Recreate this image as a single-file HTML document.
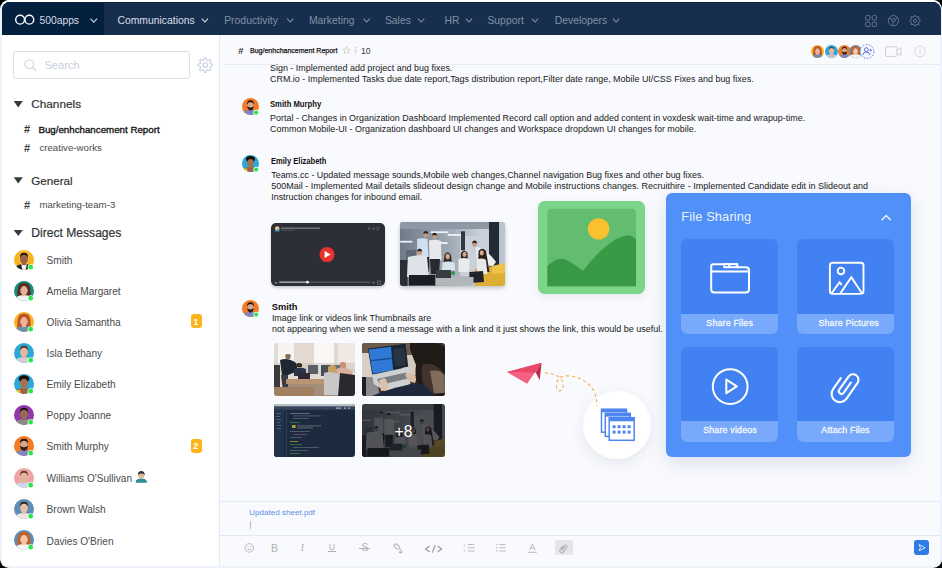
<!DOCTYPE html><html><head><meta charset="utf-8"><style>
*{margin:0;padding:0;box-sizing:border-box}
html,body{width:942px;height:568px;overflow:hidden;background:#000}
body{font-family:"Liberation Sans",sans-serif;position:relative}
.a{position:absolute}
.t{position:absolute;white-space:nowrap;line-height:1}
#app{position:absolute;left:0;top:0;width:942px;height:568px;border-radius:9px;overflow:hidden;background:#eef2fb}
svg{position:absolute;overflow:visible}
</style></head><body><div id="app">
<div class="a" style="left:0;top:0;width:942px;height:3px;background:#fff"></div>
<div class="a" style="left:1.5px;top:2px;width:939px;height:33px;background:#172e4d;border-radius:8px 8px 0 0;overflow:hidden"><div class="a" style="left:0;top:0;width:102.5px;height:33px;background:#04203f"></div><div class="a" style="left:0;top:0;width:939px;height:0.8px;background:#0c2342"></div></div>
<svg style="left:0;top:0" width="942" height="40"><circle cx="20.1" cy="19.7" r="4.4" fill="none" stroke="#fff" stroke-width="1.4"/><circle cx="29.3" cy="19.7" r="4.4" fill="none" stroke="#fff" stroke-width="1.4"/><polyline points="90.5,18.6 93.8,22.2 97.1,18.6" fill="none" stroke="#cdd5df" stroke-width="1.1"/></svg>
<div class="t" style="left:39.50px;top:15.78px;font-size:10.3px;color:#d6dde7;font-weight:normal;">500apps</div>
<div class="t" style="left:117.40px;top:15.90px;font-size:10.4px;color:#d9dfe8;font-weight:normal;">Communications</div>
<div class="t" style="left:224.20px;top:15.90px;font-size:10.4px;color:#7f91a8;font-weight:normal;">Productivity</div>
<div class="t" style="left:308.90px;top:15.90px;font-size:10.4px;color:#7f91a8;font-weight:normal;">Marketing</div>
<div class="t" style="left:384.90px;top:15.90px;font-size:10.4px;color:#7f91a8;font-weight:normal;">Sales</div>
<div class="t" style="left:444.40px;top:15.90px;font-size:10.4px;color:#7f91a8;font-weight:normal;">HR</div>
<div class="t" style="left:487.40px;top:15.90px;font-size:10.4px;color:#7f91a8;font-weight:normal;">Support</div>
<div class="t" style="left:554.70px;top:15.90px;font-size:10.4px;color:#7f91a8;font-weight:normal;">Developers</div>
<svg style="left:0;top:0" width="942" height="40"><polyline points="201.8,18.6 204.9,22 208.0,18.6" fill="none" stroke="#d9dfe8" stroke-width="1.1"/><polyline points="287.1,18.6 290.2,22 293.3,18.6" fill="none" stroke="#7f91a8" stroke-width="1.1"/><polyline points="363.6,18.6 366.7,22 369.8,18.6" fill="none" stroke="#7f91a8" stroke-width="1.1"/><polyline points="418.1,18.6 421.2,22 424.3,18.6" fill="none" stroke="#7f91a8" stroke-width="1.1"/><polyline points="465.90000000000003,18.6 469.0,22 472.1,18.6" fill="none" stroke="#7f91a8" stroke-width="1.1"/><polyline points="531.9,18.6 535.0,22 538.1,18.6" fill="none" stroke="#7f91a8" stroke-width="1.1"/><polyline points="613.0,18.6 616.1,22 619.2,18.6" fill="none" stroke="#7f91a8" stroke-width="1.1"/></svg>
<svg style="left:0;top:0" width="942" height="40">
<rect x="865.6" y="15.6" width="4.4" height="4.4" rx="1.1" fill="none" stroke="#63768f" stroke-width="1"/>
<rect x="872.2" y="15.6" width="4.4" height="4.4" rx="1.1" fill="none" stroke="#63768f" stroke-width="1"/>
<rect x="865.6" y="22.1" width="4.4" height="4.4" rx="1.1" fill="none" stroke="#63768f" stroke-width="1"/>
<rect x="872.2" y="22.1" width="4.4" height="4.4" rx="1.1" fill="none" stroke="#63768f" stroke-width="1"/>
<circle cx="893.4" cy="20.7" r="5.1" fill="none" stroke="#63768f" stroke-width="1"/>
<circle cx="893.6" cy="20.2" r="1.7" fill="none" stroke="#63768f" stroke-width="1"/>
<path d="M893.2,21.9 L892.6,25.7 M891.9,19.6 L889,18.2 M895.3,19.8 L897.3,17.4" stroke="#63768f" stroke-width="0.8" fill="none"/>
<g transform="translate(915,20.7)" fill="none" stroke="#63768f" stroke-width="1">
<path d="M0,-5.5 L1.3,-3.6 L3.9,-3.9 L3.6,-1.3 L5.5,0 L3.6,1.3 L3.9,3.9 L1.3,3.6 L0,5.5 L-1.3,3.6 L-3.9,3.9 L-3.6,1.3 L-5.5,0 L-3.6,-1.3 L-3.9,-3.9 L-1.3,-3.6 Z"/>
<circle r="1.6"/></g>
</svg>
<div class="a" style="left:1.5px;top:35px;width:217.5px;height:531px;background:#fff"></div>
<div class="a" style="left:219px;top:35px;width:1px;height:531px;background:#e2e9f4"></div>
<div class="a" style="left:220px;top:35px;width:720px;height:531px;background:#f9fafd"></div>
<div class="a" style="left:940px;top:35px;width:2px;height:533px;background:#eff1fd"></div>
<div class="a" style="left:13px;top:51px;width:177px;height:28px;border:1px solid #d8e0ec;border-radius:3px;background:#fff"></div>
<svg style="left:0;top:0" width="230" height="90">
<circle cx="29.3" cy="64.3" r="4.3" fill="none" stroke="#cdd5e0" stroke-width="1.2"/>
<line x1="32.4" y1="67.4" x2="36.2" y2="71" stroke="#cdd5e0" stroke-width="1.3"/>
<path d="M204.39,57.86 L206.21,57.86 L206.75,60.11 L207.81,60.54 L209.77,59.33 L211.07,60.63 L209.86,62.59 L210.29,63.65 L212.54,64.19 L212.54,66.01 L210.29,66.55 L209.86,67.61 L211.07,69.57 L209.77,70.87 L207.81,69.66 L206.75,70.09 L206.21,72.34 L204.39,72.34 L203.85,70.09 L202.79,69.66 L200.83,70.87 L199.53,69.57 L200.74,67.61 L200.31,66.55 L198.06,66.01 L198.06,64.19 L200.31,63.65 L200.74,62.59 L199.53,60.63 L200.83,59.33 L202.79,60.54 L203.85,60.11 Z" fill="none" stroke="#c9d2de" stroke-width="1.1" stroke-linejoin="round"/><circle cx="205.3" cy="65.1" r="2.3" fill="none" stroke="#c9d2de" stroke-width="1.1"/>
</svg>
<div class="t" style="left:44.40px;top:59.92px;font-size:11.2px;color:#c8cfd9;font-weight:normal;">Search</div>
<svg style="left:0;top:0" width="230" height="250"><polygon points="13.7,101.1 22.8,101.1 18.25,107.4" fill="#3a3a3a"/><polygon points="13.7,177.3 22.8,177.3 18.25,183.5" fill="#3a3a3a"/><polygon points="13.7,229.9 22.8,229.9 18.25,236.1" fill="#3a3a3a"/></svg>
<div class="t" style="left:31.20px;top:99.01px;font-size:11.8px;color:#333;font-weight:normal;-webkit-text-stroke:0.2px #333">Channels</div>
<div class="t" style="left:31.30px;top:174.68px;font-size:11.6px;color:#333;font-weight:normal;-webkit-text-stroke:0.2px #333">General</div>
<div class="t" style="left:31.30px;top:226.56px;font-size:12.1px;color:#333;font-weight:normal;-webkit-text-stroke:0.2px #333">Direct Messages</div>
<div class="t" style="left:24.00px;top:123.69px;font-size:11px;color:#333;font-weight:bold;">#</div>
<div class="t" style="left:38.40px;top:125.16px;font-size:9.74px;color:#161616;font-weight:normal;-webkit-text-stroke:0.35px #161616">Bug/enhchancement Report</div>
<div class="t" style="left:24.00px;top:143.49px;font-size:11px;color:#444;font-weight:bold;">#</div>
<div class="t" style="left:39.40px;top:143.49px;font-size:9.7px;color:#4a4a4a;font-weight:normal;">creative-works</div>
<div class="t" style="left:24.00px;top:199.69px;font-size:11px;color:#444;font-weight:bold;">#</div>
<div class="t" style="left:39.40px;top:199.99px;font-size:9.7px;color:#4a4a4a;font-weight:normal;">marketing-team-3</div>
<svg style="left:12.399999999999999px;top:248.0px" width="24" height="24" viewBox="-12.0 -12.0 24 24"><defs><clipPath id="c1"><circle r="10.0"/></clipPath></defs><g clip-path="url(#c1)"><rect x="-10.0" y="-10.0" width="20" height="20" fill="#f7b425"/><path d="M-10.0,11.0 Q-9.0,5.0 -3.0,4.2 L3.0,4.2 Q9.0,5.0 10.0,11.0 Z" fill="#1f2330"/><path d="M-2.8,4.2 L2.8,4.2 L1.5,11.0 L-1.5,11.0 Z" fill="#f4f4f4"/><rect x="-2.0" y="1.5" width="4.0" height="3.6" fill="#9a6248"/><ellipse cx="0" cy="-1.3" rx="3.9" ry="4.9" fill="#9a6248"/><path d="M-4.0,-1.8 Q-4.4,-7.4 0,-7.2 Q4.4,-7.4 4.0,-1.8 Q3.4,-5.0 0,-5.2 Q-3.4,-5.0 -4.0,-1.8 Z" fill="#1b1410"/></g><circle cx="6.7" cy="7.2" r="3.05" fill="#fff"/><circle cx="6.7" cy="7.2" r="2.35" fill="#25e64a"/></svg>
<div class="t" style="left:46.60px;top:255.85px;font-size:10.1px;color:#4a4a4a;font-weight:normal;">Smith</div>
<svg style="left:12.399999999999999px;top:279.0px" width="24" height="24" viewBox="-12.0 -12.0 24 24"><defs><clipPath id="c2"><circle r="10.0"/></clipPath></defs><g clip-path="url(#c2)"><rect x="-10.0" y="-10.0" width="20" height="20" fill="#13907e"/><path d="M-6.5,8.0 Q-7.5,-3.0 -4.5,-7.0 Q0,-10.0 4.5,-7.0 Q7.5,-3.0 6.5,8.0 Z" fill="#5a2f22"/><path d="M-10.0,11.0 Q-9.0,5.0 -3.0,4.2 L3.0,4.2 Q9.0,5.0 10.0,11.0 Z" fill="#f2f2f2"/><rect x="-2.0" y="1.5" width="4.0" height="3.6" fill="#e2b39a"/><ellipse cx="0" cy="-1.3" rx="3.9" ry="4.9" fill="#e2b39a"/><path d="M-4.2,0.0 Q-4.6,-7.2 0,-7.0 Q4.6,-7.2 4.2,0.0 Q2.4,-5.2 0,-5.0 Q-2.4,-5.2 -4.2,0.0 Z" fill="#5a2f22"/></g><circle cx="6.7" cy="7.2" r="3.05" fill="#fff"/><circle cx="6.7" cy="7.2" r="2.35" fill="#25e64a"/></svg>
<div class="t" style="left:46.60px;top:286.85px;font-size:10.1px;color:#4a4a4a;font-weight:normal;">Amelia Margaret</div>
<svg style="left:12.399999999999999px;top:310.0px" width="24" height="24" viewBox="-12.0 -12.0 24 24"><defs><clipPath id="c3"><circle r="10.0"/></clipPath></defs><g clip-path="url(#c3)"><rect x="-10.0" y="-10.0" width="20" height="20" fill="#f7b425"/><path d="M-6.5,8.0 Q-7.5,-3.0 -4.5,-7.0 Q0,-10.0 4.5,-7.0 Q7.5,-3.0 6.5,8.0 Z" fill="#c0522a"/><path d="M-10.0,11.0 Q-9.0,5.0 -3.0,4.2 L3.0,4.2 Q9.0,5.0 10.0,11.0 Z" fill="#6d8fa8"/><rect x="-2.0" y="1.5" width="4.0" height="3.6" fill="#eab59a"/><ellipse cx="0" cy="-1.3" rx="3.9" ry="4.9" fill="#eab59a"/><path d="M-4.2,0.0 Q-4.6,-7.2 0,-7.0 Q4.6,-7.2 4.2,0.0 Q2.4,-5.2 0,-5.0 Q-2.4,-5.2 -4.2,0.0 Z" fill="#c0522a"/></g><circle cx="6.7" cy="7.2" r="3.05" fill="#fff"/><circle cx="6.7" cy="7.2" r="2.35" fill="#25e64a"/></svg>
<div class="t" style="left:46.60px;top:317.85px;font-size:10.1px;color:#4a4a4a;font-weight:normal;">Olivia Samantha</div>
<svg style="left:12.399999999999999px;top:341.0px" width="24" height="24" viewBox="-12.0 -12.0 24 24"><defs><clipPath id="c4"><circle r="10.0"/></clipPath></defs><g clip-path="url(#c4)"><rect x="-10.0" y="-10.0" width="20" height="20" fill="#2aa8d8"/><path d="M-10.0,11.0 Q-9.0,5.0 -3.0,4.2 L3.0,4.2 Q9.0,5.0 10.0,11.0 Z" fill="#d0d0d0"/><rect x="-2.0" y="1.5" width="4.0" height="3.6" fill="#e6b8a0"/><ellipse cx="0" cy="-1.3" rx="3.9" ry="4.9" fill="#e6b8a0"/><path d="M-4.0,-1.8 Q-4.4,-7.4 0,-7.2 Q4.4,-7.4 4.0,-1.8 Q3.4,-5.0 0,-5.2 Q-3.4,-5.0 -4.0,-1.8 Z" fill="#5a3a2a"/></g><circle cx="6.7" cy="7.2" r="3.05" fill="#fff"/><circle cx="6.7" cy="7.2" r="2.35" fill="#25e64a"/></svg>
<div class="t" style="left:46.60px;top:348.85px;font-size:10.1px;color:#4a4a4a;font-weight:normal;">Isla Bethany</div>
<svg style="left:12.399999999999999px;top:372.0px" width="24" height="24" viewBox="-12.0 -12.0 24 24"><defs><clipPath id="c5"><circle r="10.0"/></clipPath></defs><g clip-path="url(#c5)"><rect x="-10.0" y="-10.0" width="20" height="20" fill="#2aa8d8"/><path d="M-10.0,11.0 Q-9.0,5.0 -3.0,4.2 L3.0,4.2 Q9.0,5.0 10.0,11.0 Z" fill="#9a6444"/><ellipse cx="0" cy="-5.2" rx="5.4" ry="3.6" fill="#1a1210"/><path d="M-10.0,11.0 L-9.0,6.0 L-4.0,6.0 L-3.0,11.0 Z" fill="#f2c21a"/><rect x="-2.0" y="1.5" width="4.0" height="3.6" fill="#a8704c"/><ellipse cx="0" cy="-1.3" rx="3.9" ry="4.9" fill="#a8704c"/><path d="M-4.0,-1.8 Q-4.4,-7.4 0,-7.2 Q4.4,-7.4 4.0,-1.8 Q3.4,-5.0 0,-5.2 Q-3.4,-5.0 -4.0,-1.8 Z" fill="#1a1210"/></g><circle cx="6.7" cy="7.2" r="3.05" fill="#fff"/><circle cx="6.7" cy="7.2" r="2.35" fill="#25e64a"/></svg>
<div class="t" style="left:46.60px;top:379.85px;font-size:10.1px;color:#4a4a4a;font-weight:normal;">Emily Elizabeth</div>
<svg style="left:12.399999999999999px;top:403.0px" width="24" height="24" viewBox="-12.0 -12.0 24 24"><defs><clipPath id="c6"><circle r="10.0"/></clipPath></defs><g clip-path="url(#c6)"><rect x="-10.0" y="-10.0" width="20" height="20" fill="#8e3aa8"/><path d="M-10.0,11.0 Q-9.0,5.0 -3.0,4.2 L3.0,4.2 Q9.0,5.0 10.0,11.0 Z" fill="#8a8a8a"/><rect x="-2.0" y="1.5" width="4.0" height="3.6" fill="#9a6a50"/><ellipse cx="0" cy="-1.3" rx="3.9" ry="4.9" fill="#9a6a50"/><path d="M-4.0,-1.8 Q-4.4,-7.4 0,-7.2 Q4.4,-7.4 4.0,-1.8 Q3.4,-5.0 0,-5.2 Q-3.4,-5.0 -4.0,-1.8 Z" fill="#1a1210"/></g><circle cx="6.7" cy="7.2" r="3.05" fill="#fff"/><circle cx="6.7" cy="7.2" r="2.35" fill="#25e64a"/></svg>
<div class="t" style="left:46.60px;top:410.85px;font-size:10.1px;color:#4a4a4a;font-weight:normal;">Poppy Joanne</div>
<svg style="left:12.399999999999999px;top:434.0px" width="24" height="24" viewBox="-12.0 -12.0 24 24"><defs><clipPath id="c7"><circle r="10.0"/></clipPath></defs><g clip-path="url(#c7)"><rect x="-10.0" y="-10.0" width="20" height="20" fill="#f47a26"/><path d="M-10.0,11.0 Q-9.0,5.0 -3.0,4.2 L3.0,4.2 Q9.0,5.0 10.0,11.0 Z" fill="#7d87c2"/><rect x="-2.0" y="1.5" width="4.0" height="3.6" fill="#d4a68c"/><ellipse cx="0" cy="-1.3" rx="3.9" ry="4.9" fill="#d4a68c"/><path d="M-3.9,-0.5 Q-3.6,4.6 0,4.9 Q3.6,4.6 3.9,-0.5 Q2.0,1.4 0,1.2 Q-2.0,1.4 -3.9,-0.5 Z" fill="#2a201c"/><path d="M-4.0,-1.8 Q-4.4,-7.4 0,-7.2 Q4.4,-7.4 4.0,-1.8 Q3.4,-5.0 0,-5.2 Q-3.4,-5.0 -4.0,-1.8 Z" fill="#1b1410"/></g><circle cx="6.7" cy="7.2" r="3.05" fill="#fff"/><circle cx="6.7" cy="7.2" r="2.35" fill="#25e64a"/></svg>
<div class="t" style="left:46.60px;top:441.85px;font-size:10.1px;color:#4a4a4a;font-weight:normal;">Smith Murphy</div>
<svg style="left:12.399999999999999px;top:466.0px" width="24" height="24" viewBox="-12.0 -12.0 24 24"><defs><clipPath id="c8"><circle r="10.0"/></clipPath></defs><g clip-path="url(#c8)"><rect x="-10.0" y="-10.0" width="20" height="20" fill="#eea3a6"/><path d="M-10.0,11.0 Q-9.0,5.0 -3.0,4.2 L3.0,4.2 Q9.0,5.0 10.0,11.0 Z" fill="#c8d8e8"/><rect x="-2.0" y="1.5" width="4.0" height="3.6" fill="#e3b49a"/><ellipse cx="0" cy="-1.3" rx="3.9" ry="4.9" fill="#e3b49a"/><path d="M-4.0,-1.8 Q-4.4,-7.4 0,-7.2 Q4.4,-7.4 4.0,-1.8 Q3.4,-5.0 0,-5.2 Q-3.4,-5.0 -4.0,-1.8 Z" fill="#6a4030"/></g><circle cx="6.7" cy="7.2" r="3.05" fill="#fff"/><circle cx="6.7" cy="7.2" r="2.35" fill="#25e64a"/></svg>
<div class="t" style="left:46.60px;top:473.85px;font-size:10.1px;color:#4a4a4a;font-weight:normal;">Williams O'Sullivan</div>
<svg style="left:12.399999999999999px;top:497.0px" width="24" height="24" viewBox="-12.0 -12.0 24 24"><defs><clipPath id="c9"><circle r="10.0"/></clipPath></defs><g clip-path="url(#c9)"><rect x="-10.0" y="-10.0" width="20" height="20" fill="#5b8fb8"/><path d="M-10.0,11.0 Q-9.0,5.0 -3.0,4.2 L3.0,4.2 Q9.0,5.0 10.0,11.0 Z" fill="#f0e8e0"/><rect x="-2.0" y="1.5" width="4.0" height="3.6" fill="#e8c0a8"/><ellipse cx="0" cy="-1.3" rx="3.9" ry="4.9" fill="#e8c0a8"/><path d="M-4.0,-1.8 Q-4.4,-7.4 0,-7.2 Q4.4,-7.4 4.0,-1.8 Q3.4,-5.0 0,-5.2 Q-3.4,-5.0 -4.0,-1.8 Z" fill="#3a2a20"/></g><circle cx="6.7" cy="7.2" r="3.05" fill="#fff"/><circle cx="6.7" cy="7.2" r="2.35" fill="#25e64a"/></svg>
<div class="t" style="left:46.60px;top:504.85px;font-size:10.1px;color:#4a4a4a;font-weight:normal;">Brown Walsh</div>
<svg style="left:12.399999999999999px;top:528.0px" width="24" height="24" viewBox="-12.0 -12.0 24 24"><defs><clipPath id="c10"><circle r="10.0"/></clipPath></defs><g clip-path="url(#c10)"><rect x="-10.0" y="-10.0" width="20" height="20" fill="#5b8fb8"/><path d="M-6.5,8.0 Q-7.5,-3.0 -4.5,-7.0 Q0,-10.0 4.5,-7.0 Q7.5,-3.0 6.5,8.0 Z" fill="#c0642a"/><path d="M-10.0,11.0 Q-9.0,5.0 -3.0,4.2 L3.0,4.2 Q9.0,5.0 10.0,11.0 Z" fill="#f4f4f4"/><rect x="-2.0" y="1.5" width="4.0" height="3.6" fill="#f0c8b0"/><ellipse cx="0" cy="-1.3" rx="3.9" ry="4.9" fill="#f0c8b0"/><path d="M-4.2,0.0 Q-4.6,-7.2 0,-7.0 Q4.6,-7.2 4.2,0.0 Q2.4,-5.2 0,-5.0 Q-2.4,-5.2 -4.2,0.0 Z" fill="#c0642a"/></g><circle cx="6.7" cy="7.2" r="3.05" fill="#fff"/><circle cx="6.7" cy="7.2" r="2.35" fill="#25e64a"/></svg>
<div class="t" style="left:46.60px;top:536.75px;font-size:10.1px;color:#4a4a4a;font-weight:normal;">Davies O'Brien</div>
<div class="a" style="left:190.8px;top:314.2px;width:10.8px;height:14.3px;border-radius:3px;background:#fbb51a"></div>
<div class="t" style="left:193.60px;top:317.58px;font-size:9px;color:#fff;font-weight:normal;font-weight:bold">1</div>
<div class="a" style="left:190.8px;top:438.9px;width:10.8px;height:14.3px;border-radius:3px;background:#fbb51a"></div>
<div class="t" style="left:193.30px;top:442.28px;font-size:9px;color:#fff;font-weight:normal;font-weight:bold">2</div>
<svg style="left:0;top:0" width="160" height="500">
<path d="M135.6,482.8 Q135.6,478.6 141.3,478.6 Q147,478.6 147,482.8 Z" fill="#2e8f92"/>
<circle cx="141.3" cy="475.4" r="3.1" fill="#e2b898"/>
<path d="M138,475.6 Q137.6,471 141.3,471 Q145,471 144.6,475.6 Q144,473.4 141.3,473.6 Q138.6,473.4 138,475.6Z" fill="#2f3236"/>
</svg>
<div class="t" style="left:238.20px;top:45.84px;font-size:9.4px;color:#333;font-weight:bold;">#</div>
<div class="t" style="left:249.60px;top:46.80px;font-size:7.8px;color:#111;font-weight:normal;transform:scaleX(0.9);transform-origin:0 0;-webkit-text-stroke:0.25px #111">Bug/enhchancement Report</div>
<svg style="left:0;top:0" width="942" height="70">
<path d="M346.6,46.6 L347.6,49.2 L350.3,49.3 L348.2,51 L348.9,53.6 L346.6,52.1 L344.3,53.6 L345,51 L342.9,49.3 L345.6,49.2 Z" fill="none" stroke="#c9c9c9" stroke-width="0.7"/>
<circle cx="355.7" cy="47.6" r="1" fill="#d3d3d3"/>
<path d="M354.6,49.4 L356.8,49.4 L356.8,52 L356.2,52 L356.2,54 L355.2,54 L355.2,52 L354.6,52 Z" fill="#d8d8d8"/>
</svg>
<div class="t" style="left:361.00px;top:46.72px;font-size:8.6px;color:#3a3a3a;font-weight:normal;">10</div>
<div class="a" style="left:223px;top:63.5px;width:717px;height:1.2px;background:#e6ebf3"></div>
<svg style="left:809.1px;top:42.7px" width="17" height="17" viewBox="-8.5 -8.5 17 17"><defs><clipPath id="c11"><circle r="6.5"/></clipPath></defs><g clip-path="url(#c11)"><rect x="-6.5" y="-6.5" width="13" height="13" fill="#f7b425"/><path d="M-4.2250000000000005,5.2 Q-4.875,-1.9500000000000002 -2.9250000000000003,-4.55 Q0,-6.5 2.9250000000000003,-4.55 Q4.875,-1.9500000000000002 4.2250000000000005,5.2 Z" fill="#c0522a"/><path d="M-6.5,7.15 Q-5.8500000000000005,3.25 -1.9500000000000002,2.7300000000000004 L1.9500000000000002,2.7300000000000004 Q5.8500000000000005,3.25 6.5,7.15 Z" fill="#6d8fa8"/><rect x="-1.3" y="0.9750000000000001" width="2.6" height="2.3400000000000003" fill="#eab59a"/><ellipse cx="0" cy="-0.8450000000000001" rx="2.535" ry="3.1850000000000005" fill="#eab59a"/><path d="M-2.7300000000000004,0.0 Q-2.9899999999999998,-4.680000000000001 0,-4.55 Q2.9899999999999998,-4.680000000000001 2.7300000000000004,0.0 Q1.56,-3.3800000000000003 0,-3.25 Q-1.56,-3.3800000000000003 -2.7300000000000004,0.0 Z" fill="#c0522a"/></g></svg>
<svg style="left:822.6px;top:42.7px" width="17" height="17" viewBox="-8.5 -8.5 17 17"><defs><clipPath id="c12"><circle r="6.5"/></clipPath></defs><g clip-path="url(#c12)"><rect x="-6.5" y="-6.5" width="13" height="13" fill="#2aa8d8"/><path d="M-6.5,7.15 Q-5.8500000000000005,3.25 -1.9500000000000002,2.7300000000000004 L1.9500000000000002,2.7300000000000004 Q5.8500000000000005,3.25 6.5,7.15 Z" fill="#c8c0d0"/><rect x="-1.3" y="0.9750000000000001" width="2.6" height="2.3400000000000003" fill="#e6b8a0"/><ellipse cx="0" cy="-0.8450000000000001" rx="2.535" ry="3.1850000000000005" fill="#e6b8a0"/><path d="M-2.6,-1.1700000000000002 Q-2.8600000000000003,-4.8100000000000005 0,-4.680000000000001 Q2.8600000000000003,-4.8100000000000005 2.6,-1.1700000000000002 Q2.21,-3.25 0,-3.3800000000000003 Q-2.21,-3.25 -2.6,-1.1700000000000002 Z" fill="#5a3a2a"/></g></svg>
<svg style="left:835.5px;top:42.7px" width="17" height="17" viewBox="-8.5 -8.5 17 17"><defs><clipPath id="c13"><circle r="6.5"/></clipPath></defs><g clip-path="url(#c13)"><rect x="-6.5" y="-6.5" width="13" height="13" fill="#f47a26"/><path d="M-6.5,7.15 Q-5.8500000000000005,3.25 -1.9500000000000002,2.7300000000000004 L1.9500000000000002,2.7300000000000004 Q5.8500000000000005,3.25 6.5,7.15 Z" fill="#7d87c2"/><rect x="-1.3" y="0.9750000000000001" width="2.6" height="2.3400000000000003" fill="#d4a68c"/><ellipse cx="0" cy="-0.8450000000000001" rx="2.535" ry="3.1850000000000005" fill="#d4a68c"/><path d="M-2.535,-0.325 Q-2.3400000000000003,2.9899999999999998 0,3.1850000000000005 Q2.3400000000000003,2.9899999999999998 2.535,-0.325 Q1.3,0.9099999999999999 0,0.78 Q-1.3,0.9099999999999999 -2.535,-0.325 Z" fill="#2a201c"/><path d="M-2.6,-1.1700000000000002 Q-2.8600000000000003,-4.8100000000000005 0,-4.680000000000001 Q2.8600000000000003,-4.8100000000000005 2.6,-1.1700000000000002 Q2.21,-3.25 0,-3.3800000000000003 Q-2.21,-3.25 -2.6,-1.1700000000000002 Z" fill="#1b1410"/></g></svg>
<svg style="left:847.1px;top:42.7px" width="17" height="17" viewBox="-8.5 -8.5 17 17"><defs><clipPath id="c14"><circle r="6.5"/></clipPath></defs><g clip-path="url(#c14)"><rect x="-6.5" y="-6.5" width="13" height="13" fill="#5b8fb8"/><path d="M-4.2250000000000005,5.2 Q-4.875,-1.9500000000000002 -2.9250000000000003,-4.55 Q0,-6.5 2.9250000000000003,-4.55 Q4.875,-1.9500000000000002 4.2250000000000005,5.2 Z" fill="#c0642a"/><path d="M-6.5,7.15 Q-5.8500000000000005,3.25 -1.9500000000000002,2.7300000000000004 L1.9500000000000002,2.7300000000000004 Q5.8500000000000005,3.25 6.5,7.15 Z" fill="#f4f4f4"/><rect x="-1.3" y="0.9750000000000001" width="2.6" height="2.3400000000000003" fill="#f0c8b0"/><ellipse cx="0" cy="-0.8450000000000001" rx="2.535" ry="3.1850000000000005" fill="#f0c8b0"/><path d="M-2.7300000000000004,0.0 Q-2.9899999999999998,-4.680000000000001 0,-4.55 Q2.9899999999999998,-4.680000000000001 2.7300000000000004,0.0 Q1.56,-3.3800000000000003 0,-3.25 Q-1.56,-3.3800000000000003 -2.7300000000000004,0.0 Z" fill="#c0642a"/></g></svg>
<svg style="left:0;top:0" width="942" height="70">
<circle cx="867" cy="51.5" r="6.9" fill="#f8f9fc" stroke="#4b5fd8" stroke-width="0.9" stroke-dasharray="1.6 1.5"/>
<circle cx="866.3" cy="49.6" r="1.9" fill="none" stroke="#4b5fd8" stroke-width="0.9"/>
<path d="M862.6,55.2 Q863,52 866.3,52 Q869.6,52 870,55.2" fill="none" stroke="#4b5fd8" stroke-width="0.9"/>
<path d="M869.5,50.2 L871.9,50.2 M870.7,49 L870.7,51.4" stroke="#4b5fd8" stroke-width="0.8"/>
<rect x="885.5" y="46.8" width="11.5" height="9.6" rx="1" fill="none" stroke="#cfcfcf" stroke-width="1"/>
<path d="M897,50 L901,47.8 L901,55.4 L897,53.2" fill="none" stroke="#cfcfcf" stroke-width="1"/>
<circle cx="920" cy="51.4" r="5.4" fill="none" stroke="#d2d2d2" stroke-width="0.9"/>
<line x1="920" y1="50.3" x2="920" y2="54.2" stroke="#d0d0d0" stroke-width="1"/>
<circle cx="920" cy="48.6" r="0.55" fill="#d0d0d0"/>
</svg>
<div class="t" style="left:270.00px;top:63.72px;font-size:8.95px;color:#202020;font-weight:normal;">Sign - Implemented add project and bug fixes.</div>
<div class="t" style="left:270.00px;top:75.32px;font-size:8.95px;color:#202020;font-weight:normal;">CRM.io - Implemented Tasks due date report,Tags distribution report,Filter date range, Mobile UI/CSS Fixes and bug fixes.</div>
<svg style="left:240.1px;top:95.7px" width="21" height="21" viewBox="-10.5 -10.5 21 21"><defs><clipPath id="c15"><circle r="8.5"/></clipPath></defs><g clip-path="url(#c15)"><rect x="-8.5" y="-8.5" width="17" height="17" fill="#f47a26"/><path d="M-8.5,9.35 Q-7.6499999999999995,4.25 -2.55,3.57 L2.55,3.57 Q7.6499999999999995,4.25 8.5,9.35 Z" fill="#7d87c2"/><rect x="-1.7" y="1.275" width="3.4" height="3.06" fill="#d4a68c"/><ellipse cx="0" cy="-1.105" rx="3.315" ry="4.165" fill="#d4a68c"/><path d="M-3.315,-0.425 Q-3.06,3.9099999999999997 0,4.165 Q3.06,3.9099999999999997 3.315,-0.425 Q1.7,1.19 0,1.02 Q-1.7,1.19 -3.315,-0.425 Z" fill="#2a201c"/><path d="M-3.4,-1.53 Q-3.74,-6.29 0,-6.12 Q3.74,-6.29 3.4,-1.53 Q2.8899999999999997,-4.25 0,-4.42 Q-2.8899999999999997,-4.25 -3.4,-1.53 Z" fill="#1b1410"/></g><circle cx="5.695" cy="6.12" r="2.8" fill="#fff"/><circle cx="5.695" cy="6.12" r="2.1" fill="#25e64a"/></svg>
<div class="t" style="left:269.70px;top:98.92px;font-size:9.9px;color:#111;font-weight:bold;transform:scaleX(0.777);transform-origin:0 0;">Smith Murphy</div>
<div class="t" style="left:270.10px;top:114.42px;font-size:8.95px;color:#202020;font-weight:normal;">Portal - Changes in Organization Dashboard Implemented Record call option and added content in voxdesk wait-time and wrapup-time.</div>
<div class="t" style="left:270.10px;top:125.22px;font-size:8.95px;color:#202020;font-weight:normal;">Common Mobile-UI - Organization dashboard UI changes and Workspace dropdown UI changes for mobile.</div>
<svg style="left:240.1px;top:152.5px" width="21" height="21" viewBox="-10.5 -10.5 21 21"><defs><clipPath id="c16"><circle r="8.5"/></clipPath></defs><g clip-path="url(#c16)"><rect x="-8.5" y="-8.5" width="17" height="17" fill="#2aa8d8"/><path d="M-8.5,9.35 Q-7.6499999999999995,4.25 -2.55,3.57 L2.55,3.57 Q7.6499999999999995,4.25 8.5,9.35 Z" fill="#9a6444"/><ellipse cx="0" cy="-4.42" rx="4.59" ry="3.06" fill="#1a1210"/><path d="M-8.5,9.35 L-7.6499999999999995,5.1 L-3.4,5.1 L-2.55,9.35 Z" fill="#f2c21a"/><rect x="-1.7" y="1.275" width="3.4" height="3.06" fill="#a8704c"/><ellipse cx="0" cy="-1.105" rx="3.315" ry="4.165" fill="#a8704c"/><path d="M-3.4,-1.53 Q-3.74,-6.29 0,-6.12 Q3.74,-6.29 3.4,-1.53 Q2.8899999999999997,-4.25 0,-4.42 Q-2.8899999999999997,-4.25 -3.4,-1.53 Z" fill="#1a1210"/></g><circle cx="5.695" cy="6.12" r="2.8" fill="#fff"/><circle cx="5.695" cy="6.12" r="2.1" fill="#25e64a"/></svg>
<div class="t" style="left:271.20px;top:156.02px;font-size:9.9px;color:#111;font-weight:bold;transform:scaleX(0.766);transform-origin:0 0;">Emily Elizabeth</div>
<div class="t" style="left:271.20px;top:170.52px;font-size:8.95px;color:#202020;font-weight:normal;">Teams.cc - Updated message sounds,Mobile web changes,Channel navigation Bug fixes and other bug fixes.</div>
<div class="t" style="left:271.20px;top:181.86px;font-size:9.02px;color:#202020;font-weight:normal;">500Mail - Implemented Mail details slideout design change and Mobile instructions changes. Recruithire - Implemented Candidate edit in Slideout and</div>
<div class="t" style="left:271.20px;top:193.32px;font-size:8.95px;color:#202020;font-weight:normal;">Instruction changes for inbound email.</div>
<svg style="left:240.0px;top:297.9px" width="21" height="21" viewBox="-10.5 -10.5 21 21"><defs><clipPath id="c17"><circle r="8.5"/></clipPath></defs><g clip-path="url(#c17)"><rect x="-8.5" y="-8.5" width="17" height="17" fill="#f47a26"/><path d="M-8.5,9.35 Q-7.6499999999999995,4.25 -2.55,3.57 L2.55,3.57 Q7.6499999999999995,4.25 8.5,9.35 Z" fill="#7d87c2"/><rect x="-1.7" y="1.275" width="3.4" height="3.06" fill="#d4a68c"/><ellipse cx="0" cy="-1.105" rx="3.315" ry="4.165" fill="#d4a68c"/><path d="M-3.315,-0.425 Q-3.06,3.9099999999999997 0,4.165 Q3.06,3.9099999999999997 3.315,-0.425 Q1.7,1.19 0,1.02 Q-1.7,1.19 -3.315,-0.425 Z" fill="#2a201c"/><path d="M-3.4,-1.53 Q-3.74,-6.29 0,-6.12 Q3.74,-6.29 3.4,-1.53 Q2.8899999999999997,-4.25 0,-4.42 Q-2.8899999999999997,-4.25 -3.4,-1.53 Z" fill="#1b1410"/></g><circle cx="5.695" cy="6.12" r="2.8" fill="#fff"/><circle cx="5.695" cy="6.12" r="2.1" fill="#25e64a"/></svg>
<div class="t" style="left:271.70px;top:303.13px;font-size:9.3px;color:#111;font-weight:bold;">Smith</div>
<div class="t" style="left:271.90px;top:313.92px;font-size:8.95px;color:#202020;font-weight:normal;">Image link or videos link Thumbnails are</div>
<div class="t" style="left:271.90px;top:325.36px;font-size:9.03px;color:#202020;font-weight:normal;">not appearing when we send a message with a link and it just shows the link, this would be useful.</div>
<div class="a" style="left:220px;top:501.3px;width:720px;height:1px;background:#e6ebf3"></div>
<div class="t" style="left:249.30px;top:508.89px;font-size:8.05px;color:#5a8ee6;font-weight:normal;">Updated sheet.pdf</div>
<div class="a" style="left:250px;top:521px;width:0.8px;height:8px;background:#b8b8b8"></div>
<div class="a" style="left:220px;top:534.8px;width:720px;height:1px;background:#e2e8f4"></div>
<div class="a" style="left:271px;top:223.1px;width:114px;height:63.4px;border-radius:5px;background:#2c2f37;box-shadow:0 2px 3px rgba(0,0,0,0.18);overflow:hidden">
<svg style="left:0;top:0" width="114" height="65">
<circle cx="6.2" cy="5.6" r="2.3" fill="#e8c880"/><rect x="4" y="6.6" width="4.4" height="1.8" fill="#3aa0c8"/>
<rect x="10" y="4.6" width="39" height="1.1" fill="#c8c8c8" opacity="0.6"/>
<rect x="10" y="6.8" width="14" height="0.8" fill="#8a8a8a" opacity="0.5"/>
<rect x="97" y="4.4" width="2.2" height="2.2" fill="#777" opacity="0.6"/><rect x="101.5" y="4.4" width="2.2" height="2.2" fill="#777" opacity="0.6"/><circle cx="106.8" cy="5.5" r="1.4" fill="none" stroke="#777" stroke-width="0.7" opacity="0.8"/>
<circle cx="56" cy="31.6" r="7.5" fill="#e8322c"/>
<path d="M53.6,28.1 L59.6,31.6 L53.6,35.1 Z" fill="#fff"/>
<rect x="8.3" y="58.7" width="91" height="0.9" fill="#6b6e75"/>
<rect x="8.3" y="58.7" width="28.2" height="0.9" fill="#d8d8d8"/>
<circle cx="36.5" cy="59.15" r="1.4" fill="#f4f4f4"/>
<rect x="3.5" y="59" width="3" height="1.5" fill="#777"/>
<rect x="101.5" y="58.6" width="2.2" height="2" fill="#777" opacity="0.7"/><rect x="106.3" y="58" width="3.2" height="3.2" fill="none" stroke="#777" stroke-width="0.7"/>
</svg></div>
<div class="a" style="left:400.2px;top:222px;width:105px;height:64px;border-radius:3px;overflow:hidden;box-shadow:0 2px 4px rgba(0,0,0,0.22)">
<svg style="left:0;top:0" width="105" height="64" viewBox="0 0 105 64">
<defs><linearGradient id="og1" x1="0" y1="0" x2="1" y2="0"><stop offset="0" stop-color="#6f7b88"/><stop offset="0.5" stop-color="#a3adb8"/><stop offset="0.8" stop-color="#cbd2d9"/><stop offset="1" stop-color="#bcc4cc"/></linearGradient></defs>
<rect width="105" height="64" fill="url(#og1)"/>
<rect x="0" y="0" width="90" height="7" fill="#8e99a5"/>
<rect x="30.7" y="9.3" width="17.7" height="1.8" fill="#eef3f8"/><rect x="47.7" y="12" width="16.3" height="1.8" fill="#eef3f8"/><rect x="0.2" y="18.8" width="12.2" height="1.8" fill="#e8eef4"/><rect x="41" y="20" width="6.7" height="2" fill="#e8eef4"/>
<rect x="6" y="28" width="10" height="14" fill="#5f6a76"/>
<rect x="60" y="14" width="29" height="40" fill="#c9d0d7"/>
<rect x="61" y="9.3" width="4" height="19" fill="#2d3844"/>
<rect x="89" y="0" width="10.2" height="48" fill="#222b36"/>
<rect x="99.2" y="0" width="5.8" height="64" fill="#bcc5ce"/>
<rect x="0" y="38" width="7.5" height="26" fill="#2a2e34"/>
<path d="M17,17 Q22,15.5 27.5,17 L28.5,36 L17.5,36 Z" fill="#cfdef0"/>
<path d="M20,35 L29.5,35 L29,50 L21,50 Z" fill="#1d2430"/>
<ellipse cx="25.8" cy="12.6" rx="2.3" ry="2.8" fill="#c59a80"/><path d="M23.4,12 Q23.6,9 25.8,9 Q28.2,9 28.2,12 Q26,10.6 23.4,12 Z" fill="#2a1e18"/>
<path d="M29,18.5 Q35,17 41,19 L41.5,38 L29.5,38 Z" fill="#e6e8ea"/>
<path d="M30,37 L40,37 L39,52 L31,52 Z" fill="#262a30"/>
<ellipse cx="34.5" cy="14.2" rx="2.3" ry="2.7" fill="#c59a80"/><path d="M32.1,13.6 Q32.3,10.7 34.5,10.7 Q36.9,10.7 36.9,13.6 Q34.7,12.3 32.1,13.6 Z" fill="#2a1e18"/>
<path d="M44.5,33 Q47.7,27.5 51,33 L52,42 L43.5,42 Z" fill="#3a2a20"/><ellipse cx="47.7" cy="34.5" rx="2.1" ry="2.7" fill="#d2aa92"/>
<path d="M42.5,40.5 Q48,38.5 54.5,40.5 L55,48.6 L42,48.6 Z" fill="#d9e3ee"/>
<path d="M61,31 Q64,26.5 67.5,31 L68,46 L60.5,46 Z" fill="#2e2018"/><ellipse cx="64.5" cy="32.4" rx="2" ry="2.6" fill="#d2aa92"/>
<path d="M58.5,37 Q64,35 69.5,37 L69,50 L58.5,50 Z" fill="#e8eaec"/>
<path d="M76,25 Q86,26 96,40 L93,44 L77,43 Z" fill="#eceef0"/>
<ellipse cx="74.6" cy="22" rx="2.3" ry="2.7" fill="#c59a80"/><path d="M72.2,21.4 Q72.4,18.5 74.6,18.5 Q77,18.5 77,21.4 Q74.8,20.1 72.2,21.4 Z" fill="#2a1e18"/>
<path d="M74.8,47 L90,44.5 L105,43.2 L105,64 L74.8,64 Z" fill="#dcae35"/>
<path d="M92,44 L105,41 L105,51 L92,52 Z" fill="#eec24a"/>
<path d="M78.5,29 Q82,24.5 86,29 L89.5,50 L78,50 Z" fill="#2e2018"/><ellipse cx="81.8" cy="30.8" rx="2.1" ry="2.6" fill="#d2aa92"/>
<path d="M77,37.5 Q82,35.5 86,38 L87.5,52 L77,52 Z" fill="#e6e8ea"/>
<path d="M69.4,50 L83,49 L84,60 L69.4,61 Z" fill="#20232a"/>
<path d="M8,35 Q17,32 27,35 L29,55 L7,55 Z" fill="#dfe3e7"/>
<ellipse cx="19.6" cy="30.4" rx="2.4" ry="2.9" fill="#c59a80"/><path d="M17.1,29.8 Q17.3,26.7 19.6,26.7 Q22.1,26.7 22.1,29.8 Q19.8,28.4 17.1,29.8 Z" fill="#2a1e18"/>
<path d="M9,53 L35.5,53 L35.5,63.5 L9,63.5 Z" fill="#1a1e25"/>
<path d="M35.5,55 L73.5,55 L73.5,63.5 L35.5,63.5 Z" fill="#b2b7bc"/>
<path d="M36,48 L51,48 L51,56 L36,56 Z" fill="#383c43"/>
<circle cx="53.1" cy="51" r="2" fill="#2a9a4a"/>
</svg></div>
<div class="a" style="left:273.5px;top:342.8px;width:81.5px;height:53px;border-radius:3px;overflow:hidden">
<svg style="left:0;top:0" width="82" height="53">
<rect width="82" height="53" fill="#e2dad2"/>
<rect x="4" y="0" width="16" height="26" fill="#f6f4f1"/><rect x="40" y="0" width="20" height="28" fill="#f8f7f4"/><rect x="64" y="0" width="18" height="26" fill="#eee9e4"/>
<rect x="0" y="20" width="82" height="10" fill="#cfc6bc" opacity="0.6"/>
<rect x="0" y="22" width="6" height="25" fill="#3a3a3a"/>
<rect x="34" y="22" width="10" height="9" fill="#5a6068"/><rect x="47" y="22" width="10" height="11" fill="#4a5058"/><rect x="60" y="22" width="8" height="10" fill="#6a7078"/>
<path d="M11,12 Q14,10 17,12 L16,16 L12,16 Z" fill="#8a6a50"/>
<path d="M6,17 Q14,14 22,20 L24,28 L14,32 L8,32 Z" fill="#1e2634"/>
<path d="M7,32 L14,32 L14,48 L9,48 Z" fill="#3a3a44"/>
<path d="M22,21 Q25,19 28,21 L28,24 L23,24 Z" fill="#3a2a22"/>
<path d="M20,26 Q26,23 32,26 L32,33 L20,33 Z" fill="#2a3548"/>
<rect x="24" y="30" width="12" height="7" fill="#2a2e34"/>
<path d="M12,36 L72,36 L72,41 L12,41 Z" fill="#b89470"/>
<path d="M14,41 L70,41 L70,53 L14,53 Z" fill="#8a6e55" opacity="0.7"/>
<path d="M0,44 L40,44 L40,53 L0,53 Z" fill="#a08060"/>
<path d="M66,20 Q69,18 72,20 L72,25 L66,25 Z" fill="#c89070"/>
<path d="M62,26 Q70,22 78,28 L78,40 L62,40 Z" fill="#d8b0a0"/>
<path d="M54,24 Q58,20 62,24 L63,30 L54,30 Z" fill="#c8a060"/>
<path d="M50,30 Q58,27 66,32 L66,52 L50,52 Z" fill="#c8c8c8"/>
<path d="M66,30 L82,32 L82,53 L64,53 Z" fill="#2a2a2e"/>
</svg></div>
<div class="a" style="left:362.3px;top:342.8px;width:82.5px;height:53px;border-radius:3px;overflow:hidden">
<svg style="left:0;top:0" width="83" height="53">
<rect width="83" height="53" fill="#3a322c"/>
<rect x="0" y="0" width="50" height="12" fill="#6e5a4a"/>
<rect x="0" y="10" width="14" height="28" fill="#d9d0c4"/>
<rect x="40" y="12" width="14" height="20" fill="#d4cabd"/>
<rect x="0" y="34" width="5" height="19" fill="#1e1e20"/>
<path d="M4,34 L14,34 L18,53 L4,53 Z" fill="#8c8c8e"/>
<path d="M5.8,5.6 L43.5,0.7 L46.2,23.6 L10.2,31.8 Z" fill="#1b2531"/>
<path d="M6.6,6.6 L29,3.7 L31.2,27.3 L10.8,30.8 Z" fill="#2f7ad6"/>
<path d="M8,17 L30,14.6 L30.3,16 L8.3,18.4 Z" fill="#1d4f98"/>
<path d="M31,6 L42,4.5 L44,22 L33,24 Z" fill="#2a3848" opacity="0.8"/>
<path d="M10.2,31.8 L46.2,24.1 L48.4,41.1 L25.5,49.8 L11.8,41 Z" fill="#cfd0d2"/>
<path d="M15,36 L44,29.5 L46,35.5 L18,42 Z" fill="#7c7d80"/>
<path d="M17,38 Q20,34 24,36 L27,47 L19,48 Z" fill="#dcc0aa"/>
<path d="M43,31 Q50,28 55,34 L53,40 L46,38 Z" fill="#d8bca6"/>
<path d="M48,0 Q70,-4 83,4 L83,53 L58,53 Q52,36 54,22 Q50,12 48,6 Z" fill="#211b18"/>
<path d="M60,22 Q70,18 80,28 L82,50 L66,53 Q58,40 60,22 Z" fill="#4a3a32" opacity="0.8"/>
<path d="M68,28 Q78,26 83,32 L83,50 L72,50 Z" fill="#b89a88" opacity="0.55"/>
<path d="M10,53 Q30,44 56,40 Q66,42 72,53 Z" fill="#1d283c"/>
</svg></div>
<div class="a" style="left:273.5px;top:404.1px;width:81.5px;height:53px;border-radius:3px;overflow:hidden">
<svg style="left:0;top:0" width="82" height="53">
<rect width="82" height="53" fill="#1d2b3e"/>
<rect x="0" y="0" width="82" height="2.6" fill="#b8bec6"/>
<rect x="0" y="2.6" width="82" height="3.2" fill="#34455c"/>
<rect x="70" y="3.6" width="2" height="1" fill="#c8ccd2"/><rect x="74" y="3.6" width="2" height="1" fill="#c8ccd2"/><rect x="62" y="3.6" width="5" height="1" fill="#c8ccd2"/>
<rect x="0" y="5.8" width="10" height="47.2" fill="#22324a"/>
<g fill="#6a7a90" opacity="0.8"><rect x="2" y="9" width="5" height="0.8"/><rect x="2" y="12" width="4" height="0.8"/><rect x="2" y="15" width="5" height="0.8"/><rect x="3" y="18" width="3" height="0.8"/><rect x="3" y="21" width="4" height="0.8"/><rect x="3" y="24" width="4" height="0.8"/></g>
<rect x="12" y="8" width="0.6" height="44" fill="#3c4c62"/>
<g opacity="0.75">
<rect x="16" y="9" width="20" height="0.8" fill="#8a98aa"/><rect x="19" y="11.5" width="28" height="0.8" fill="#6a7a8e"/><rect x="19" y="14" width="16" height="0.8" fill="#6a7a8e"/>
<rect x="16" y="18" width="10" height="0.8" fill="#4a9a48"/>
<rect x="18" y="21" width="3.6" height="3" fill="#d8c838"/><rect x="23" y="21.5" width="24" height="0.8" fill="#8a94a2"/><rect x="23" y="23.5" width="16" height="0.8" fill="#8a94a2"/>
<rect x="16" y="27" width="20" height="0.8" fill="#6a7a8e"/><rect x="19" y="30" width="14" height="0.8" fill="#a050a0"/>
<rect x="16" y="33" width="12" height="0.8" fill="#6a7a8e"/>
<rect x="16" y="37" width="8" height="0.8" fill="#c8c040"/><rect x="16" y="40" width="12" height="0.8" fill="#4a9a48"/><rect x="19" y="43" width="26" height="0.8" fill="#6a7a8e"/><rect x="16" y="46" width="18" height="0.8" fill="#6a7a8e"/><rect x="16" y="49" width="10" height="0.8" fill="#4a9a48"/>
</g>
</svg></div>
<div class="a" style="left:362.3px;top:404.1px;width:82.5px;height:53px;border-radius:3px;overflow:hidden">
<svg style="left:0;top:0" width="83" height="53" viewBox="0 0 105 64" preserveAspectRatio="xMidYMid slice">
<defs><linearGradient id="og2" x1="0" y1="0" x2="1" y2="0"><stop offset="0" stop-color="#6f7b88"/><stop offset="0.5" stop-color="#a3adb8"/><stop offset="0.8" stop-color="#cbd2d9"/><stop offset="1" stop-color="#bcc4cc"/></linearGradient></defs>
<rect width="105" height="64" fill="url(#og2)"/>
<rect x="0" y="0" width="90" height="7" fill="#8e99a5"/>
<rect x="30.7" y="9.3" width="17.7" height="1.8" fill="#eef3f8"/><rect x="47.7" y="12" width="16.3" height="1.8" fill="#eef3f8"/><rect x="0.2" y="18.8" width="12.2" height="1.8" fill="#e8eef4"/><rect x="41" y="20" width="6.7" height="2" fill="#e8eef4"/>
<rect x="6" y="28" width="10" height="14" fill="#5f6a76"/>
<rect x="60" y="14" width="29" height="40" fill="#c9d0d7"/>
<rect x="61" y="9.3" width="4" height="19" fill="#2d3844"/>
<rect x="89" y="0" width="10.2" height="48" fill="#222b36"/>
<rect x="99.2" y="0" width="5.8" height="64" fill="#bcc5ce"/>
<rect x="0" y="38" width="7.5" height="26" fill="#2a2e34"/>
<path d="M17,17 Q22,15.5 27.5,17 L28.5,36 L17.5,36 Z" fill="#cfdef0"/>
<path d="M20,35 L29.5,35 L29,50 L21,50 Z" fill="#1d2430"/>
<ellipse cx="25.8" cy="12.6" rx="2.3" ry="2.8" fill="#c59a80"/><path d="M23.4,12 Q23.6,9 25.8,9 Q28.2,9 28.2,12 Q26,10.6 23.4,12 Z" fill="#2a1e18"/>
<path d="M29,18.5 Q35,17 41,19 L41.5,38 L29.5,38 Z" fill="#e6e8ea"/>
<path d="M30,37 L40,37 L39,52 L31,52 Z" fill="#262a30"/>
<ellipse cx="34.5" cy="14.2" rx="2.3" ry="2.7" fill="#c59a80"/><path d="M32.1,13.6 Q32.3,10.7 34.5,10.7 Q36.9,10.7 36.9,13.6 Q34.7,12.3 32.1,13.6 Z" fill="#2a1e18"/>
<path d="M44.5,33 Q47.7,27.5 51,33 L52,42 L43.5,42 Z" fill="#3a2a20"/><ellipse cx="47.7" cy="34.5" rx="2.1" ry="2.7" fill="#d2aa92"/>
<path d="M42.5,40.5 Q48,38.5 54.5,40.5 L55,48.6 L42,48.6 Z" fill="#d9e3ee"/>
<path d="M61,31 Q64,26.5 67.5,31 L68,46 L60.5,46 Z" fill="#2e2018"/><ellipse cx="64.5" cy="32.4" rx="2" ry="2.6" fill="#d2aa92"/>
<path d="M58.5,37 Q64,35 69.5,37 L69,50 L58.5,50 Z" fill="#e8eaec"/>
<path d="M76,25 Q86,26 96,40 L93,44 L77,43 Z" fill="#eceef0"/>
<ellipse cx="74.6" cy="22" rx="2.3" ry="2.7" fill="#c59a80"/><path d="M72.2,21.4 Q72.4,18.5 74.6,18.5 Q77,18.5 77,21.4 Q74.8,20.1 72.2,21.4 Z" fill="#2a1e18"/>
<path d="M74.8,47 L90,44.5 L105,43.2 L105,64 L74.8,64 Z" fill="#dcae35"/>
<path d="M92,44 L105,41 L105,51 L92,52 Z" fill="#eec24a"/>
<path d="M78.5,29 Q82,24.5 86,29 L89.5,50 L78,50 Z" fill="#2e2018"/><ellipse cx="81.8" cy="30.8" rx="2.1" ry="2.6" fill="#d2aa92"/>
<path d="M77,37.5 Q82,35.5 86,38 L87.5,52 L77,52 Z" fill="#e6e8ea"/>
<path d="M69.4,50 L83,49 L84,60 L69.4,61 Z" fill="#20232a"/>
<path d="M8,35 Q17,32 27,35 L29,55 L7,55 Z" fill="#dfe3e7"/>
<ellipse cx="19.6" cy="30.4" rx="2.4" ry="2.9" fill="#c59a80"/><path d="M17.1,29.8 Q17.3,26.7 19.6,26.7 Q22.1,26.7 22.1,29.8 Q19.8,28.4 17.1,29.8 Z" fill="#2a1e18"/>
<path d="M9,53 L35.5,53 L35.5,63.5 L9,63.5 Z" fill="#1a1e25"/>
<path d="M35.5,55 L73.5,55 L73.5,63.5 L35.5,63.5 Z" fill="#b2b7bc"/>
<path d="M36,48 L51,48 L51,56 L36,56 Z" fill="#383c43"/>
<circle cx="53.1" cy="51" r="2" fill="#2a9a4a"/>
<rect x="-10" y="-10" width="130" height="90" fill="#141619" opacity="0.70"/>
<text x="52.5" y="40" text-anchor="middle" font-family="Liberation Sans" font-size="19" fill="#fff">+8</text>
</svg></div>
<div class="a" style="left:537.8px;top:200.9px;width:107.2px;height:93px;border-radius:6.5px;background:#7dd58a;box-shadow:0 3px 8px rgba(60,80,120,0.10)">
<svg style="left:0;top:0" width="108" height="93">
<defs><clipPath id="gi"><path d="M9.2,12.4 Q9.2,7.4 14.2,7.4 L93.2,7.4 Q98.2,7.4 98.2,12.4 L98.2,85.6 L9.2,85.6 Z"/></clipPath></defs>
<g clip-path="url(#gi)">
<rect x="9.2" y="7.4" width="89" height="78.2" fill="#63bd70"/>
<circle cx="60.6" cy="27.9" r="10.7" fill="#fbc02e"/>
<path d="M9.2,65.3 Q18,56 26,58 Q34,61 44.9,69.9 Q68,40 86,34.9 Q94,33 98.2,38.5 L98.2,85.6 L9.2,85.6 Z" fill="#389a45"/>
</g></svg></div>
<svg style="left:0;top:0" width="942" height="568">

<path d="M506.8,372 L541.6,362.7 L527.1,383.7 Z" fill="#f4607f"/>
<path d="M506.8,372 L541.6,362.7 L535.8,372.4 Z" fill="#e9476a"/>
<path d="M535.8,372.4 L541.6,362.7 L539.7,380.2 Z" fill="#b82a4a"/>
</svg>
<div class="a" style="left:583.4px;top:390.7px;width:68px;height:68px;border-radius:50%;background:#fff;box-shadow:0 4px 14px rgba(70,90,140,0.12)"></div>
<svg style="left:0;top:0" width="942" height="568">
<g fill="#fff" stroke="#4f86ee" stroke-width="1.5">
<rect x="601.5" y="409.2" width="25" height="23"/>
<rect x="605.3" y="413.4" width="25" height="23"/>
<rect x="609.2" y="417.7" width="25" height="22.6"/>
</g>
<rect x="601.5" y="409.2" width="25" height="3.2" fill="#4f86ee"/>
<rect x="605.3" y="413.4" width="25" height="3.2" fill="#4f86ee"/>
<rect x="609.2" y="417.7" width="25" height="3.6" fill="#4f86ee"/>
<g fill="#4f86ee">
<rect x="612.6" y="425.2" width="3" height="3"/><rect x="617.6" y="425.2" width="3" height="3"/><rect x="622.6" y="425.2" width="3" height="3"/><rect x="627.6" y="425.2" width="3" height="3"/>
<rect x="612.6" y="430.6" width="3" height="3"/><rect x="617.6" y="430.6" width="3" height="3"/><rect x="622.6" y="430.6" width="3" height="3"/><rect x="627.6" y="430.6" width="3" height="3"/>
</g>
</svg>
<svg style="left:0;top:0" width="942" height="568"><path d="M544.6,372.8 C552,373.3 558,375.2 561.2,379 C564.8,384 563.2,391.2 559.6,390.9 C556,390.6 555.4,384 558.2,379.4 C560.5,376.2 564,375.9 567.2,375.8 C575.5,375.8 586,380 592,388 C595.5,393 596.9,399 597.1,406" fill="none" stroke="#f4b25c" stroke-width="1.15" stroke-dasharray="3.3 2.7"/></svg>
<div class="a" style="left:666.3px;top:193.2px;width:245px;height:263.8px;border-radius:6px;background:#5090f8;box-shadow:0 6px 18px rgba(60,90,160,0.16)"></div>
<div class="t" style="left:681.30px;top:210.78px;font-size:12.9px;color:#eaf2ff;font-weight:normal;letter-spacing:0.1px">File Sharing</div>
<svg style="left:0;top:0" width="942" height="568">
<polyline points="881.6,220.2 886.2,215.5 890.8,220.2" fill="none" stroke="#f0f6ff" stroke-width="1.4"/>
</svg>
<div class="a" style="left:681.1px;top:239.1px;width:96.8px;height:95.3px;border-radius:6px;overflow:hidden;background:#4281f1"><div class="a" style="left:0;top:74.7px;width:96.8px;height:20.6px;background:#78a9fa"></div></div>
<svg style="left:0;top:0" width="942" height="568"><g fill="none" stroke="#ffffff" stroke-width="2" stroke-linejoin="round">
<path d="M711.2,266.4 Q711.2,264.3 713.3,264.3 L737.2,264.3 L737.2,267.2 L745.8,267.2 Q749,267.2 749,270.4 L749,289.3 Q749,292.5 745.8,292.5 L714.4,292.5 Q711.2,292.5 711.2,289.3 Z"/>
<line x1="711.2" y1="271.6" x2="749" y2="271.6"/>
</g>
<rect x="723.3" y="263.3" width="14.9" height="4.9" fill="#ffffff"/>
<rect x="724.9" y="265.1" width="3.4" height="1.1" fill="#4281f1"/><rect x="730.4" y="265.1" width="5.4" height="1.1" fill="#4281f1"/>
</svg>
<div class="t" style="left:706.30px;top:318.61px;font-size:8.85px;color:#f4f8ff;font-weight:normal;-webkit-text-stroke:0.3px #f4f8ff;letter-spacing:0.18px">Share Files</div>
<div class="a" style="left:796.9px;top:239.1px;width:96.8px;height:95.3px;border-radius:6px;overflow:hidden;background:#4281f1"><div class="a" style="left:0;top:74.7px;width:96.8px;height:20.6px;background:#78a9fa"></div></div>
<svg style="left:0;top:0" width="942" height="568"><g fill="none" stroke="#ffffff" stroke-width="1.9">
<rect x="829.9" y="262.7" width="33.6" height="31.2" rx="2.8"/>
<circle cx="841" cy="270.9" r="3.3"/>
<path d="M831.8,293 L839.6,282.3 L841.8,284.8"/>
<path d="M840.2,293.6 L851.3,277.2 L861.8,293"/>
</g></svg>
<div class="t" style="left:818.40px;top:318.61px;font-size:8.85px;color:#f4f8ff;font-weight:normal;-webkit-text-stroke:0.3px #f4f8ff;letter-spacing:0.18px">Share Pictures</div>
<div class="a" style="left:681.1px;top:346.6px;width:96.8px;height:95.3px;border-radius:6px;overflow:hidden;background:#4281f1"><div class="a" style="left:0;top:74.7px;width:96.8px;height:20.6px;background:#78a9fa"></div></div>
<svg style="left:0;top:0" width="942" height="568"><g fill="none" stroke="#ffffff" stroke-width="2">
<circle cx="730.2" cy="386.6" r="17.4"/>
<path d="M726.3,379.6 L736.8,386.4 L726.3,393.2 Z" stroke-linejoin="round"/>
</g></svg>
<div class="t" style="left:703.20px;top:426.11px;font-size:8.85px;color:#f4f8ff;font-weight:normal;-webkit-text-stroke:0.3px #f4f8ff;letter-spacing:0.18px">Share videos</div>
<div class="a" style="left:796.9px;top:346.6px;width:96.8px;height:95.3px;border-radius:6px;overflow:hidden;background:#4281f1"><div class="a" style="left:0;top:74.7px;width:96.8px;height:20.6px;background:#78a9fa"></div></div>
<svg style="left:0;top:0" width="942" height="568"><path d="M840.83,378.14 L833.08,389.20 A8.20,8.20 0 0 0 846.52,398.60 L857.53,382.88 A5.50,5.50 0 0 0 848.52,376.57 L839.34,389.67 A2.70,2.70 0 0 0 843.77,392.77 L850.82,382.69" fill="none" stroke="#ffffff" stroke-width="2.1" stroke-linecap="round"/></svg>
<div class="t" style="left:821.30px;top:426.11px;font-size:8.85px;color:#f4f8ff;font-weight:normal;-webkit-text-stroke:0.3px #f4f8ff;letter-spacing:0.18px">Attach Files</div>
<svg style="left:0;top:0" width="942" height="568">
<g fill="none" stroke="#b4b4b4" stroke-width="0.9">
<circle cx="249.3" cy="547.9" r="4.3"/>
<path d="M247.6,549.6 L251,549.6"/>
</g>
<circle cx="247.8" cy="546.7" r="0.55" fill="#b4b4b4"/><circle cx="250.8" cy="546.7" r="0.55" fill="#b4b4b4"/>
<path d="M397.2,549.4 L394.6,546.8 Q393.3,545.3 394.5,544.3 Q395.7,543.3 397.1,544.6 L399.8,547.3 M399.2,548.6 L401.4,550.8 Q402.4,552 401.3,552.5 Q400.3,553 399.3,552" fill="none" stroke="#b0b0b0" stroke-width="1.1" stroke-linecap="round"/>
<g fill="none" stroke="#9a9a9a" stroke-width="1.2">
<polyline points="429.6,545.9 425.6,548.9 429.6,551.9"/>
<line x1="435.2" y1="545.3" x2="432.3" y2="552.6"/>
<polyline points="437.6,545.9 441.6,548.9 437.6,551.9"/>
</g>
<g fill="none" stroke="#b4b4b4" stroke-width="0.9">
<line x1="467.8" y1="544.6" x2="474.5" y2="544.6"/><line x1="467.8" y1="547.8" x2="474.5" y2="547.8"/><line x1="467.8" y1="551" x2="474.5" y2="551"/>
<line x1="499.3" y1="544.6" x2="505.6" y2="544.6"/><line x1="499.3" y1="547.8" x2="505.6" y2="547.8"/><line x1="499.3" y1="551" x2="505.6" y2="551"/>
</g>
<g fill="#b4b4b4"><circle cx="496.8" cy="544.6" r="0.7"/><circle cx="496.8" cy="547.8" r="0.7"/><circle cx="496.8" cy="551" r="0.7"/></g>
<text x="463.6" y="547" font-family="Liberation Sans" font-size="3.6" fill="#b4b4b4">1</text>
<text x="463.6" y="552" font-family="Liberation Sans" font-size="3.6" fill="#b4b4b4">2</text>
<path d="M529.6,550.3 L532.4,543.9 L535.3,550.3 M530.6,548.2 L534.3,548.2" fill="none" stroke="#b4b4b4" stroke-width="0.9"/>
<line x1="528.2" y1="552.3" x2="536.8" y2="552.3" stroke="#b4b4b4" stroke-width="0.9"/>
</g>
</svg>
<div class="t" style="left:271.00px;top:543.11px;font-size:10.5px;color:#b0b0b0;font-weight:normal;font-weight:normal">B</div>
<div class="t" style="left:300.60px;top:543.11px;font-size:10.5px;color:#b0b0b0;font-weight:normal;font-style:italic;font-family:'Liberation Serif',serif">I</div>
<div class="t" style="left:328.90px;top:542.69px;font-size:8.4px;color:#b0b0b0;font-weight:normal;">U</div>
<div class="a" style="left:328.2px;top:551.0px;width:8.2px;height:0.9px;background:#b0b0b0"></div>
<div class="t" style="left:361.60px;top:543.37px;font-size:10.2px;color:#b0b0b0;font-weight:normal;">S</div>
<div class="a" style="left:359px;top:547.6px;width:11.4px;height:0.9px;background:#b0b0b0"></div>
<div class="a" style="left:555.2px;top:540px;width:17.6px;height:15.2px;border-radius:2px;background:#e4e5e8"></div>
<svg style="left:0;top:0" width="942" height="568">
<path d="M562.37,546.27 L560.15,549.33 A2.16,2.16 0 0 0 563.65,551.87 L566.73,547.63 A1.57,1.57 0 0 0 564.19,545.79 L561.54,549.44 A0.59,0.59 0 0 0 562.50,550.14 L564.61,547.23" fill="none" stroke="#9a9a9a" stroke-width="0.9" stroke-linecap="round"/>
</svg>
<div class="a" style="left:914.1px;top:540.3px;width:14.9px;height:14.8px;border-radius:3px;background:#2f7be6"></div>
<svg style="left:0;top:0" width="942" height="568">
<path d="M919.2,544.6 L925.2,547.7 L919.2,550.8 L920.4,547.7 Z" fill="none" stroke="#fff" stroke-width="0.8" stroke-linejoin="round"/>
</svg>
</div></body></html>
